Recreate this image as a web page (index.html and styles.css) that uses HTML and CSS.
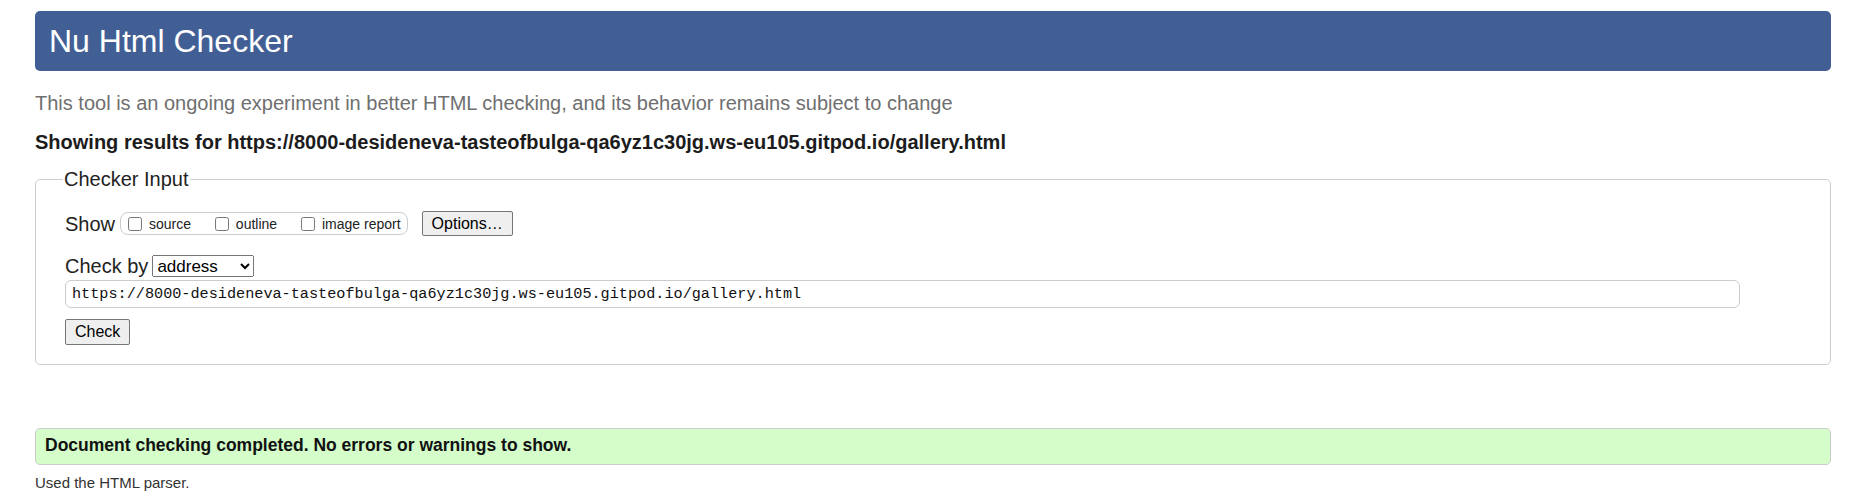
FILE: index.html
```html
<!DOCTYPE html>
<html lang="en">
<head>
<meta charset="utf-8">
<title>Nu Html Checker</title>
<link rel="stylesheet" href="styles.css">
</head>
<body>
<h1 class="title">Nu Html Checker</h1>
<p class="intro">This tool is an ongoing experiment in better HTML checking, and its behavior remains subject to change</p>
<p class="results">Showing results for https://8000-desideneva-tasteofbulga-qa6yz1c30jg.ws-eu105.gitpod.io/gallery.html</p>
<fieldset class="checker">
  <legend class="legend">Checker Input</legend>
  <div class="row show-row">
    <span class="label">Show</span>
    <span class="show-box">
      <label class="opt"><input type="checkbox"> source</label>
      <label class="opt"><input type="checkbox"> outline</label>
      <label class="opt"><input type="checkbox"> image report</label>
    </span>
    <button class="btn" type="button">Options…</button>
  </div>
  <div class="row by-row">
    <span class="label">Check by</span>
    <select class="sel"><option>address</option><option>file upload</option><option>text input</option></select>
  </div>
  <input class="url" type="text" value="https://8000-desideneva-tasteofbulga-qa6yz1c30jg.ws-eu105.gitpod.io/gallery.html">
  <div class="row submit-row">
    <button class="btn" type="button">Check</button>
  </div>
</fieldset>
<p class="success">Document checking completed. No errors or warnings to show.</p>
<p class="parser">Used the HTML parser.</p>
</body>
</html>
```

FILE: styles.css
```css
html {
  background: #fff;
}
body {
  margin: 0;
  padding: 11px 21px 0 35px;
  font-family: "Liberation Sans", Arial, sans-serif;
  color: #222;
}
.title {
  margin: 0;
  height: 60px;
  line-height: 60px;
  padding: 0 14px;
  background: #415f95;
  color: #fff;
  border-radius: 5px;
  font-size: 32px;
  font-weight: normal;
}
.intro {
  margin: 21px 0 0 0;
  font-size: 20px;
  line-height: 22px;
  color: #6f6f6f;
}
.results {
  margin: 17px 0 0 0;
  font-size: 20px;
  line-height: 22px;
  font-weight: bold;
  color: #1c1c1c;
}
.checker {
  margin: 14px 0 0 0;
  padding: 20px 0 19px 29px;
  border: 1px solid #ccc;
  border-radius: 5px;
  min-width: 0;
}
.legend {
  font-size: 20px;
  line-height: 24px;
  padding: 0 1px;
  margin-left: -2px;
  color: #222;
}
.row {
  display: flex;
  align-items: center;
}
.label {
  font-size: 20px;
  line-height: 24px;
  color: #222;
}
.show-row {
  height: 25px;
}
.show-box {
  display: inline-flex;
  align-items: center;
  height: 21px;
  margin-left: 5px;
  padding: 0 6px 0 3px;
  border: 1px solid #ccc;
  border-radius: 8px;
  font-size: 14px;
  color: #222;
}
.opt {
  display: inline-flex;
  align-items: center;
  white-space: pre;
}
.opt + .opt {
  margin-left: 20px;
}
.opt input {
  margin: 3px 3px 3px 4px;
  width: 14px;
  height: 14px;
}
.btn {
  font-family: "Liberation Sans", Arial, sans-serif;
  font-size: 16px;
  padding: 3px 9px;
  margin: 0;
  background: #efefef;
  border: 1px solid #767676;
  border-radius: 2px;
  color: #000;
}
.show-row .btn {
  margin-left: 14px;
  height: 25px;
}
.by-row {
  margin-top: 19px;
  height: 22px;
}
.sel {
  margin-left: 4px;
  height: 22px;
  width: 102px;
  font-family: "Liberation Sans", Arial, sans-serif;
  font-size: 17px;
  color: #000;
}
.url {
  display: block;
  box-sizing: border-box;
  margin: 3px 0 0 0;
  width: 1675px;
  height: 28px;
  padding: 0 6px;
  border: 1px solid #ccc;
  border-radius: 6px;
  font-family: "Liberation Mono", "DejaVu Sans Mono", monospace;
  font-size: 15.2px;
  color: #111;
}
.submit-row {
  margin-top: 11px;
}
.submit-row .btn {
  height: 26px;
}
.success {
  margin: 63px 0 0 0;
  padding: 5px 9px 8px 9px;
  background: #d4fdca;
  border: 1px solid #ccc;
  border-radius: 5px;
  font-size: 17.5px;
  line-height: 22px;
  font-weight: bold;
  color: #111;
}
.parser {
  margin: 9px 0 0 0;
  font-size: 15px;
  line-height: 18px;
  color: #333;
}
```
